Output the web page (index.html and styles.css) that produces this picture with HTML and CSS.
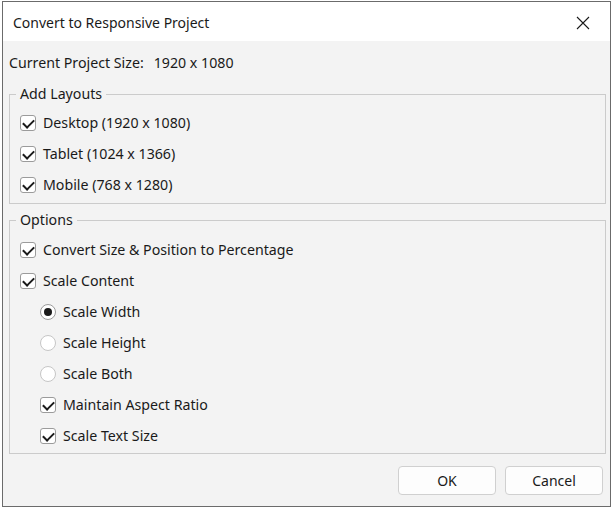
FILE: index.html
```html
<!DOCTYPE html>
<html lang="en">
<head>
    <meta charset="UTF-8">
    <title>Convert to Responsive Project</title>
    <link rel="stylesheet" href="styles.css">
</head>
<body>
    <div class="window">
        <div class="titlebar">
            <span class="title">Convert to Responsive Project</span>
            <button class="close-btn" aria-label="Close">
                <svg width="14" height="14" viewBox="0 0 14 14"><path d="M1 1 L13 13 M13 1 L1 13" stroke="#1a1a1a" stroke-width="1.1" fill="none"/></svg>
            </button>
        </div>
        <div class="content">
            <div class="project-size">
                <span>Current Project Size:</span>
                <span class="size-value">1920 x 1080</span>
            </div>

            <fieldset class="group">
                <legend>Add Layouts</legend>
                <label class="row"><span class="check on"></span>Desktop (1920 x 1080)</label>
                <label class="row"><span class="check on"></span>Tablet (1024 x 1366)</label>
                <label class="row"><span class="check on"></span>Mobile (768 x 1280)</label>
            </fieldset>

            <fieldset class="group options">
                <legend>Options</legend>
                <label class="row"><span class="check on"></span>Convert Size &amp; Position to Percentage</label>
                <label class="row"><span class="check on"></span>Scale Content</label>
                <label class="row sub"><span class="radio on"></span>Scale Width</label>
                <label class="row sub"><span class="radio"></span>Scale Height</label>
                <label class="row sub"><span class="radio"></span>Scale Both</label>
                <label class="row sub"><span class="check on"></span>Maintain Aspect Ratio</label>
                <label class="row sub"><span class="check on"></span>Scale Text Size</label>
            </fieldset>

            <div class="buttons">
                <button class="btn">OK</button>
                <button class="btn">Cancel</button>
            </div>
        </div>
    </div>
</body>
</html>
```

FILE: styles.css
```css
body {
    margin: 0;
    padding: 0;
    background: #fff;
    font-family: "Noto Sans", "Open Sans", sans-serif;
    color: #1a1a1a;
}
.window {
    box-sizing: border-box;
    width: 609px;
    height: 506px;
    margin: 1px 0 0 2px;
    border: 1px solid #6b6b6b;
    background: #f3f3f3;
    display: flex;
    flex-direction: column;
}
.titlebar {
    box-sizing: border-box;
    height: 39px;
    background: #fff;
    display: flex;
    align-items: center;
    justify-content: space-between;
    padding: 2px 0 0 10px;
}
.title {
    font-size: 14px;
}
.close-btn {
    width: 46px;
    height: 36px;
    border: none;
    background: transparent;
    display: flex;
    align-items: center;
    justify-content: center;
    padding: 0;
    margin-right: 4px;
}
.content {
    flex: 1;
    padding: 0 4px 0 6px;
    font-size: 14.2px;
    display: flex;
    flex-direction: column;
}
.project-size {
    height: 20px;
    line-height: 20px;
    margin-top: 12px;
    display: flex;
}
.size-value {
    margin-left: 10px;
}
.group {
    margin: 11px 0 0 0;
    padding: 3px 0 3px 10px;
    border: 1px solid #cbcbcb;
    min-width: 0;
}
.group legend {
    padding: 0 4px;
    margin-left: -4px;
    line-height: 20px;
}
.options {
    margin-top: 6px;
    padding-top: 4px;
    padding-bottom: 2px;
}
.row {
    height: 31px;
    display: flex;
    align-items: center;
}
.row.sub {
    padding-left: 20px;
}
.check {
    box-sizing: border-box;
    width: 16px;
    height: 16px;
    border: 1px solid #9b9b9b;
    border-radius: 3px;
    background: #fff;
    margin-right: 7px;
    position: relative;
}
.check.on::after {
    content: "";
    position: absolute;
    left: 4px;
    top: 1px;
    width: 5px;
    height: 9px;
    border-right: 2px solid #1a1a1a;
    border-bottom: 2px solid #1a1a1a;
    transform: rotate(45deg);
}
.radio {
    box-sizing: border-box;
    width: 16px;
    height: 16px;
    border: 1px solid #c6c6c6;
    border-radius: 50%;
    background: #fff;
    margin-right: 7px;
    display: flex;
    align-items: center;
    justify-content: center;
}
.radio.on {
    border-color: #9b9b9b;
}
.radio.on::after {
    content: "";
    width: 8px;
    height: 8px;
    border-radius: 50%;
    background: #1a1a1a;
}
.buttons {
    display: flex;
    justify-content: flex-end;
    gap: 9px;
    margin-top: 12px;
    padding-right: 3px;
}
.btn {
    width: 98px;
    height: 29px;
    border: 1px solid #d0d0d0;
    border-radius: 4px;
    background: #fdfdfd;
    font-family: "Noto Sans", "Open Sans", sans-serif;
    font-size: 14px;
    color: #1a1a1a;
}
```
